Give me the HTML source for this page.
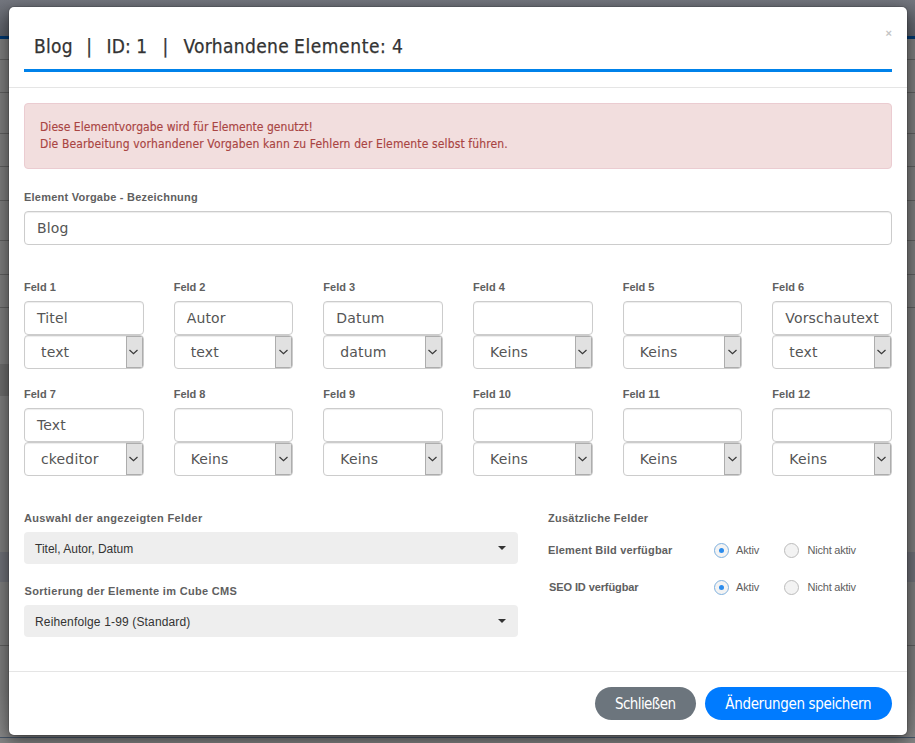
<!DOCTYPE html><html lang="de"><head><meta charset="utf-8"><title>Blog</title><style>
*{box-sizing:border-box;margin:0;padding:0}
html,body{width:915px;height:743px;overflow:hidden}
body{position:relative;font-family:"Liberation Sans",Arial,sans-serif;background:#7b7b7b;color:#555}
.abs{position:absolute}
#bg{position:absolute;left:0;top:0;width:915px;height:743px;background:#7c7c7c;overflow:hidden}
#bg div{position:absolute;left:0;width:915px}
#modal{position:absolute;left:8px;top:6px;width:900px;height:730px;background:#fff;border:1px solid rgba(0,0,0,.12);background-clip:padding-box;border-radius:6px;box-shadow:0 5px 15px rgba(0,0,0,.5)}
.t{position:absolute;white-space:pre;line-height:1}
.lbl{position:absolute;white-space:pre;font-weight:bold;font-size:11px;line-height:11px;color:#606060}
.inp{position:absolute;height:34px;border:1px solid #ccc;border-radius:4px;background:#fff;box-shadow:inset 0 1px 1px rgba(0,0,0,.075);font-family:"DejaVu Sans",Verdana,sans-serif;font-size:14px;letter-spacing:.15px;color:#555;line-height:33px;padding-left:12px;white-space:pre;overflow:hidden}
.sel{position:absolute;height:34px;border:1px solid #ccc;border-radius:4px;background:#fff;box-shadow:inset 0 1px 1px rgba(0,0,0,.075);font-family:"DejaVu Sans",Verdana,sans-serif;font-size:14px;letter-spacing:.15px;color:#555;line-height:32px;padding-left:16px;white-space:pre;overflow:hidden}
.sel i{position:absolute;right:0;top:0;width:17px;height:32px;background:#e1e1e1;border:1px solid #adadad;display:block}
.sel i svg{position:absolute;left:2.5px;top:12px}
.dd{position:absolute;height:32px;border-radius:4px;background:#eee;font-size:12px;color:#333;line-height:34px;padding-left:11px;white-space:pre}
.dd b{position:absolute;right:12px;top:14px;width:0;height:0;border-left:4px solid transparent;border-right:4px solid transparent;border-top:4px solid #333}
.radio{position:absolute;width:15px;height:15px;border-radius:50%;border:1px solid #bcbcbc;background:#f3f3f3}
.radio.on{border-color:#7fb1df}
.radio.on:after{content:"";position:absolute;left:4px;top:4px;width:5px;height:5px;border-radius:50%;background:#2b8ced}
.rl{position:absolute;font-size:11px;line-height:11px;color:#5e5e5e;white-space:pre}
.btn{position:absolute;height:33px;border-radius:17px;color:#fff;font-family:"DejaVu Sans Condensed","DejaVu Sans",sans-serif;font-size:15px;line-height:34px;text-align:center;white-space:pre}
</style></head><body>
<div id="bg">
<div style="top:0;height:36px;background:linear-gradient(#73767e,#5b5e66)"></div>
<div style="top:36px;height:3px;background:#00366d"></div>
<div style="top:59px;height:1px;background:#5e5e5e"></div>
<div style="top:92px;height:1px;background:#5e5e5e"></div>
<div style="top:133px;height:1px;background:#5e5e5e"></div>
<div style="top:166px;height:1px;background:#5e5e5e"></div>
<div style="top:200px;height:1px;background:#5e5e5e"></div>
<div style="top:240px;height:1px;background:#5e5e5e"></div>
<div style="top:274px;height:1px;background:#5e5e5e"></div>
<div style="top:307px;height:1px;background:#5e5e5e"></div>
<div style="top:645px;height:1px;background:#5e5e5e"></div>
<div style="top:364px;height:32px;width:200px;background:#6b6b6b"></div>
<div style="top:552px;height:30px;background:#6d6f76"></div>
<div style="top:690px;height:53px;background:linear-gradient(#7c7c7c,#878787 85%)"></div>
<div style="top:737px;height:1px;background:#46566a"></div>
<div style="top:738px;height:5px;background:#858585"></div>
</div>
<div id="modal"></div>
<div id="title" style="position:absolute;left:0;top:35px;height:22px;font-family:'DejaVu Sans Condensed',sans-serif;font-size:19px;line-height:22px;color:#333;white-space:pre;-webkit-text-stroke:.25px #333"><span class="abs" style="left:34px;letter-spacing:.28px">Blog</span><span class="abs" style="left:86.3px">|</span><span class="abs" style="left:106.5px;letter-spacing:.1px">ID: 1</span><span class="abs" style="left:162.5px">|</span><span class="abs" style="left:183.5px;letter-spacing:.33px">Vorhandene</span><span class="abs" style="left:294px;letter-spacing:.6px">Elemente:</span><span class="abs" style="left:392px">4</span></div>
<div class="t" style="left:885.5px;top:26.3px;font-size:11px;font-weight:bold;color:#c4c4c4;line-height:14px">×</div>
<div class="abs" style="left:24px;top:69px;width:868px;height:3px;background:#0082ea"></div>
<div class="abs" style="left:9px;top:87px;width:898px;height:1px;background:#e5e5e5"></div>
<div class="abs" style="left:24px;top:103px;width:868px;height:66px;background:#f2dede;border:1px solid #ebccd1;border-radius:4px"></div>
<div class="t" id="a1" style="left:40px;top:119px;font-family:'DejaVu Sans Condensed',sans-serif;font-size:12px;line-height:17px;color:#a94442;-webkit-text-stroke:.15px #a94442"><span style="letter-spacing:.035px">Diese Elementvorgabe wird für Elemente genutzt!</span>
<span style="letter-spacing:.135px">Die Bearbeitung vorhandener Vorgaben kann zu Fehlern der Elemente selbst führen.</span></div>
<div class="lbl" id="l0" style="left:24px;top:192px;letter-spacing:.23px">Element Vorgabe - Bezeichnung</div>
<div class="inp" style="left:24px;top:211px;width:868px">Blog</div>
<div class="lbl" style="left:24px;top:282px;letter-spacing:0">Feld 1</div>
<div class="inp" style="left:24px;top:301px;width:119.67px">Titel</div>
<div class="sel" style="left:24px;top:335px;width:119.67px">text<i><svg width="9" height="6" viewBox="0 0 9 6"><path d="M0.5 1 L4.5 4.6 L8.5 1" fill="none" stroke="#3a3a3a" stroke-width="1.25"/></svg></i></div>
<div class="lbl" style="left:173.67px;top:282px;letter-spacing:0">Feld 2</div>
<div class="inp" style="left:173.67px;top:301px;width:119.67px">Autor</div>
<div class="sel" style="left:173.67px;top:335px;width:119.67px">text<i><svg width="9" height="6" viewBox="0 0 9 6"><path d="M0.5 1 L4.5 4.6 L8.5 1" fill="none" stroke="#3a3a3a" stroke-width="1.25"/></svg></i></div>
<div class="lbl" style="left:323.33px;top:282px;letter-spacing:0">Feld 3</div>
<div class="inp" style="left:323.33px;top:301px;width:119.67px">Datum</div>
<div class="sel" style="left:323.33px;top:335px;width:119.67px">datum<i><svg width="9" height="6" viewBox="0 0 9 6"><path d="M0.5 1 L4.5 4.6 L8.5 1" fill="none" stroke="#3a3a3a" stroke-width="1.25"/></svg></i></div>
<div class="lbl" style="left:473px;top:282px;letter-spacing:0">Feld 4</div>
<div class="inp" style="left:473px;top:301px;width:119.67px"></div>
<div class="sel" style="left:473px;top:335px;width:119.67px">Keins<i><svg width="9" height="6" viewBox="0 0 9 6"><path d="M0.5 1 L4.5 4.6 L8.5 1" fill="none" stroke="#3a3a3a" stroke-width="1.25"/></svg></i></div>
<div class="lbl" style="left:622.67px;top:282px;letter-spacing:0">Feld 5</div>
<div class="inp" style="left:622.67px;top:301px;width:119.67px"></div>
<div class="sel" style="left:622.67px;top:335px;width:119.67px">Keins<i><svg width="9" height="6" viewBox="0 0 9 6"><path d="M0.5 1 L4.5 4.6 L8.5 1" fill="none" stroke="#3a3a3a" stroke-width="1.25"/></svg></i></div>
<div class="lbl" style="left:772.33px;top:282px;letter-spacing:0">Feld 6</div>
<div class="inp" style="left:772.33px;top:301px;width:119.67px">Vorschautext</div>
<div class="sel" style="left:772.33px;top:335px;width:119.67px">text<i><svg width="9" height="6" viewBox="0 0 9 6"><path d="M0.5 1 L4.5 4.6 L8.5 1" fill="none" stroke="#3a3a3a" stroke-width="1.25"/></svg></i></div>
<div class="lbl" style="left:24px;top:389px;letter-spacing:0">Feld 7</div>
<div class="inp" style="left:24px;top:408px;width:119.67px">Text</div>
<div class="sel" style="left:24px;top:442px;width:119.67px">ckeditor<i><svg width="9" height="6" viewBox="0 0 9 6"><path d="M0.5 1 L4.5 4.6 L8.5 1" fill="none" stroke="#3a3a3a" stroke-width="1.25"/></svg></i></div>
<div class="lbl" style="left:173.67px;top:389px;letter-spacing:0">Feld 8</div>
<div class="inp" style="left:173.67px;top:408px;width:119.67px"></div>
<div class="sel" style="left:173.67px;top:442px;width:119.67px">Keins<i><svg width="9" height="6" viewBox="0 0 9 6"><path d="M0.5 1 L4.5 4.6 L8.5 1" fill="none" stroke="#3a3a3a" stroke-width="1.25"/></svg></i></div>
<div class="lbl" style="left:323.33px;top:389px;letter-spacing:0">Feld 9</div>
<div class="inp" style="left:323.33px;top:408px;width:119.67px"></div>
<div class="sel" style="left:323.33px;top:442px;width:119.67px">Keins<i><svg width="9" height="6" viewBox="0 0 9 6"><path d="M0.5 1 L4.5 4.6 L8.5 1" fill="none" stroke="#3a3a3a" stroke-width="1.25"/></svg></i></div>
<div class="lbl" style="left:473px;top:389px;letter-spacing:0">Feld 10</div>
<div class="inp" style="left:473px;top:408px;width:119.67px"></div>
<div class="sel" style="left:473px;top:442px;width:119.67px">Keins<i><svg width="9" height="6" viewBox="0 0 9 6"><path d="M0.5 1 L4.5 4.6 L8.5 1" fill="none" stroke="#3a3a3a" stroke-width="1.25"/></svg></i></div>
<div class="lbl" style="left:622.67px;top:389px;letter-spacing:0">Feld 11</div>
<div class="inp" style="left:622.67px;top:408px;width:119.67px"></div>
<div class="sel" style="left:622.67px;top:442px;width:119.67px">Keins<i><svg width="9" height="6" viewBox="0 0 9 6"><path d="M0.5 1 L4.5 4.6 L8.5 1" fill="none" stroke="#3a3a3a" stroke-width="1.25"/></svg></i></div>
<div class="lbl" style="left:772.33px;top:389px;letter-spacing:0">Feld 12</div>
<div class="inp" style="left:772.33px;top:408px;width:119.67px"></div>
<div class="sel" style="left:772.33px;top:442px;width:119.67px">Keins<i><svg width="9" height="6" viewBox="0 0 9 6"><path d="M0.5 1 L4.5 4.6 L8.5 1" fill="none" stroke="#3a3a3a" stroke-width="1.25"/></svg></i></div>
<div class="lbl" style="left:24px;top:513px;letter-spacing:.35px">Auswahl der angezeigten Felder</div>
<div class="dd" style="left:24px;top:532px;width:494px">Titel, Autor, Datum<b></b></div>
<div class="lbl" style="left:24.6px;top:586px;letter-spacing:.31px">Sortierung der Elemente im Cube CMS</div>
<div class="dd" style="left:24px;top:605px;width:494px;letter-spacing:.15px">Reihenfolge 1-99 (Standard)<b></b></div>
<div class="lbl" style="left:548px;top:513px;letter-spacing:.24px">Zusätzliche Felder</div>
<div class="lbl" style="left:548px;top:545px;letter-spacing:.19px">Element Bild verfügbar</div>
<div class="lbl" style="left:549px;top:582px;letter-spacing:-.1px">SEO ID verfügbar</div>
<div class="radio on" style="left:714px;top:542.5px"></div>
<div class="rl" style="left:736px;top:545px;letter-spacing:-.15px">Aktiv</div>
<div class="radio" style="left:784px;top:542.5px"></div>
<div class="rl" style="left:807.5px;top:545px;letter-spacing:-.22px">Nicht aktiv</div>
<div class="radio on" style="left:714px;top:579.5px"></div>
<div class="rl" style="left:736px;top:582px;letter-spacing:-.15px">Aktiv</div>
<div class="radio" style="left:784px;top:579.5px"></div>
<div class="rl" style="left:807.5px;top:582px;letter-spacing:-.22px">Nicht aktiv</div>
<div class="abs" style="left:9px;top:671px;width:898px;height:1px;background:#e5e5e5"></div>
<div class="btn" style="left:594.5px;top:687px;width:101.5px;background:#6c757d;letter-spacing:-.6px">Schließen</div>
<div class="btn" style="left:704.5px;top:687px;width:187.5px;background:#007bff;letter-spacing:-.35px">Änderungen speichern</div>
</body></html>
